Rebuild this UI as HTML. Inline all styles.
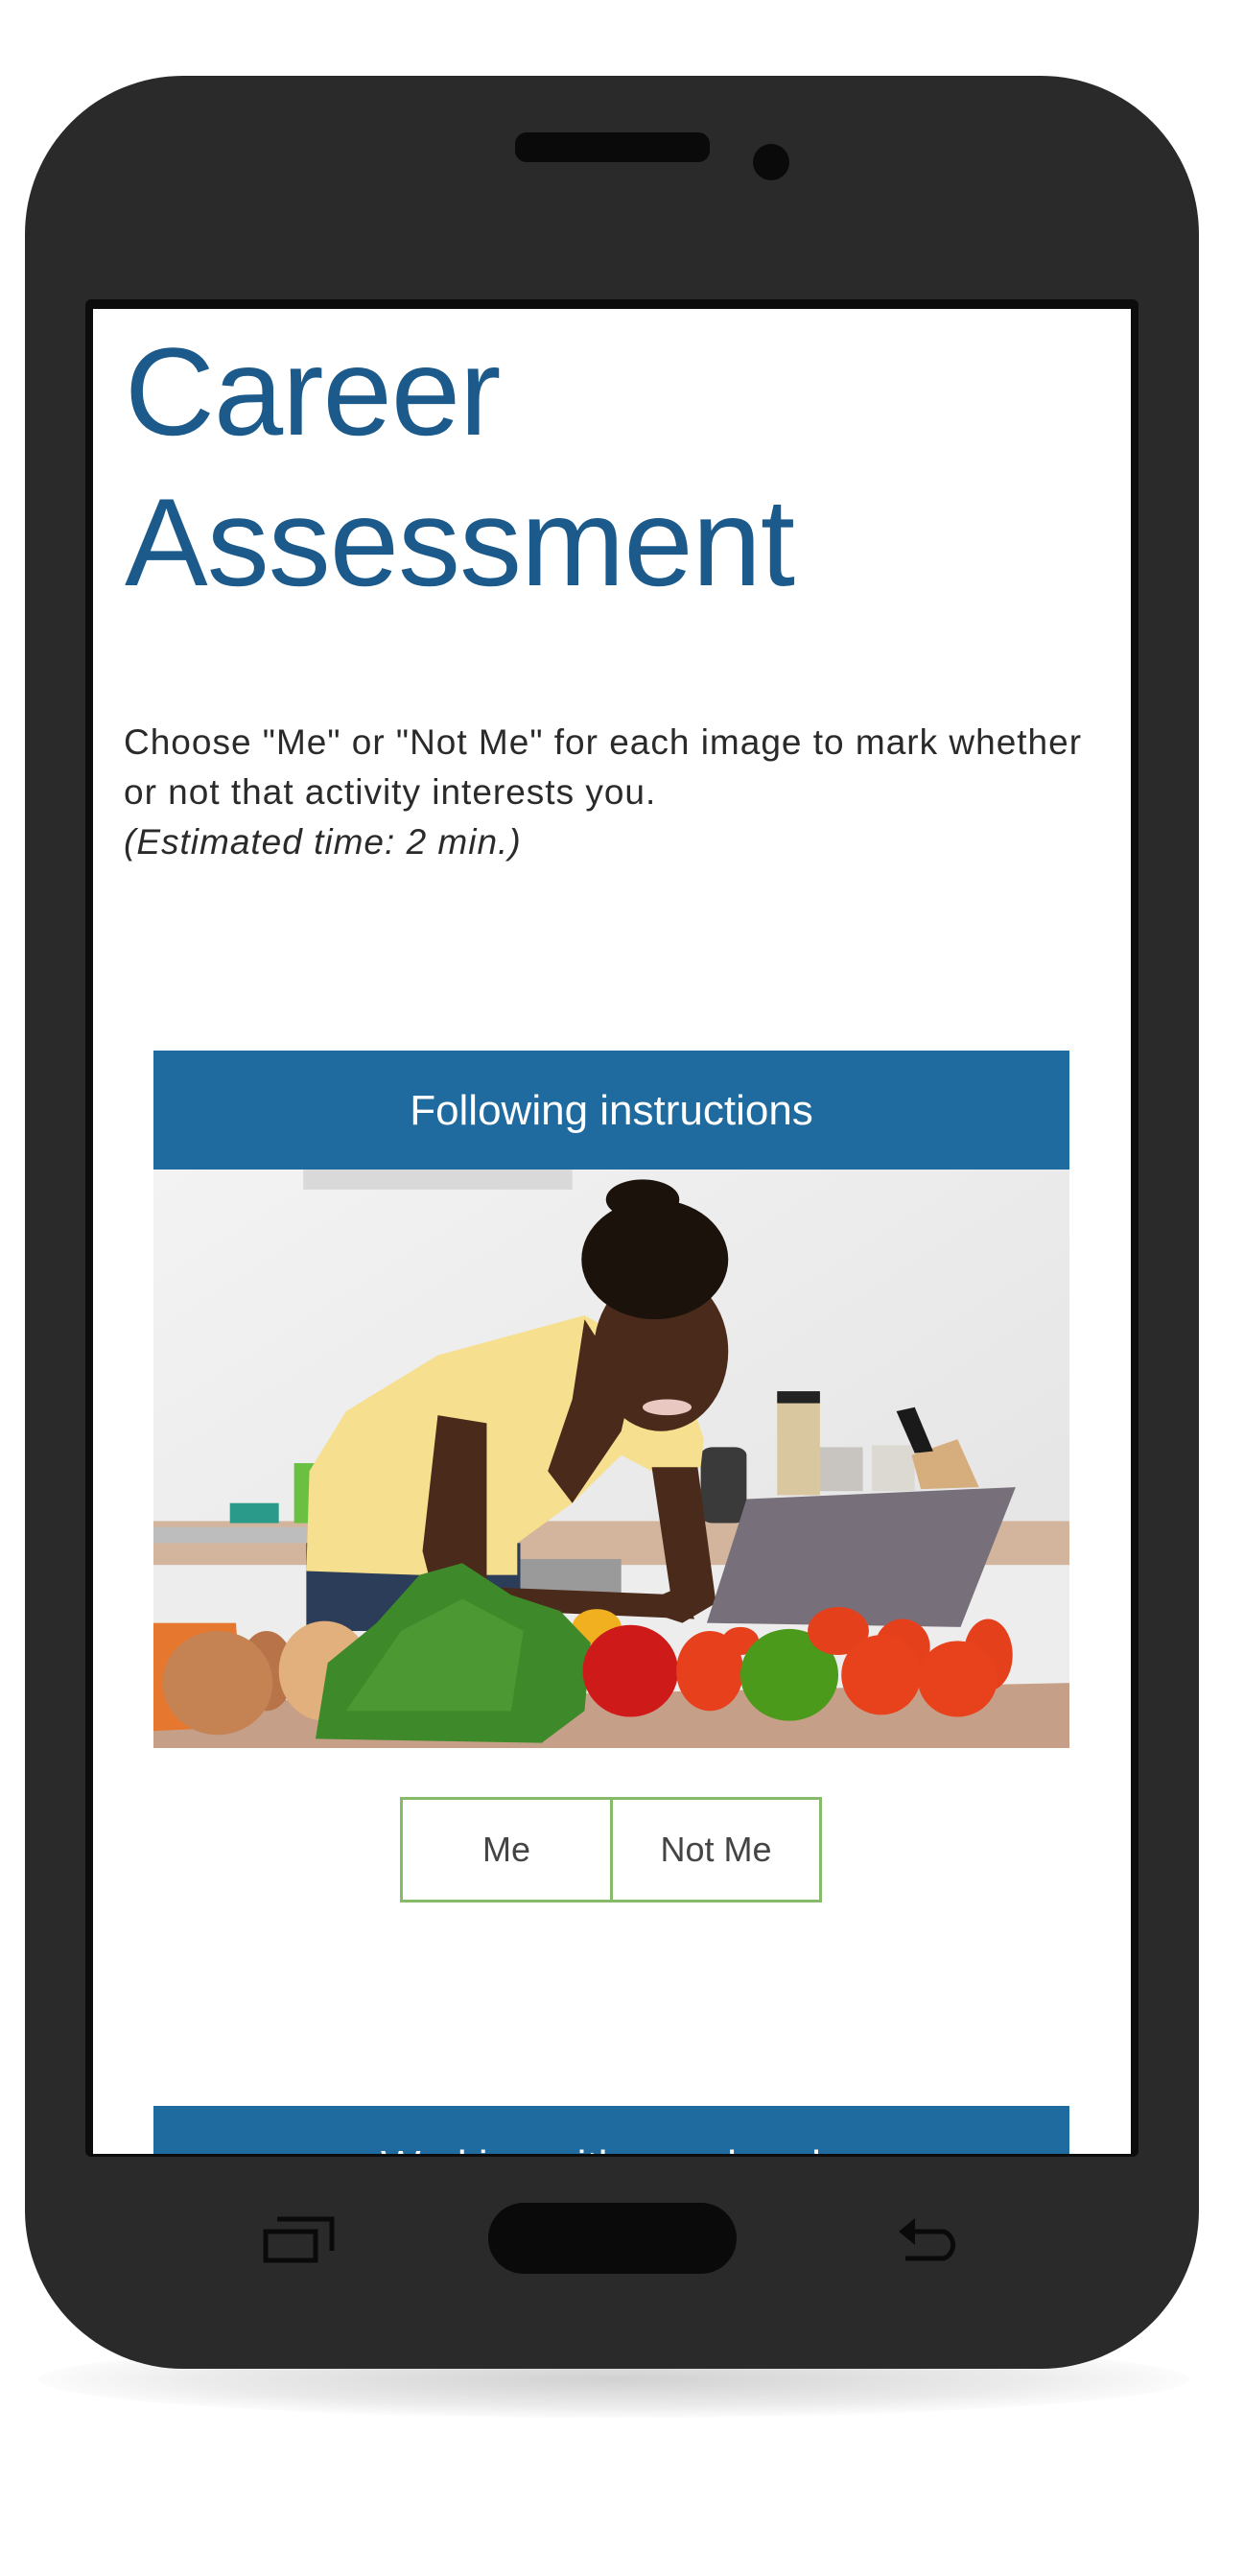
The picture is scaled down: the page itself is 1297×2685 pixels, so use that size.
<!DOCTYPE html>
<html><head><meta charset="utf-8">
<style>
html,body{margin:0;padding:0;background:#fff;}
body{width:1297px;height:2685px;position:relative;overflow:hidden;font-family:"Liberation Sans",sans-serif;}
.shadow{position:absolute;left:40px;top:2440px;width:1200px;height:80px;border-radius:50%;background:radial-gradient(ellipse at center,rgba(0,0,0,0.18) 0%,rgba(0,0,0,0.08) 50%,rgba(0,0,0,0) 75%);}
.phone{position:absolute;left:26px;top:79px;width:1224px;height:2390px;background:#292a29;border-radius:165px;}
.bezel{position:absolute;left:89px;top:312px;width:1098px;height:1936px;background:#0c0c0c;border-radius:6px;}
.screen{position:absolute;left:97px;top:322px;width:1082px;height:1923px;background:#fff;overflow:hidden;}
.speaker{position:absolute;left:537px;top:138px;width:203px;height:31px;background:#0a0a0a;border-radius:12px;}
.cam{position:absolute;left:785px;top:150px;width:38px;height:38px;background:#0a0a0a;border-radius:50%;}
.home{position:absolute;left:509px;top:2296px;width:259px;height:74px;background:#0a0a0a;border-radius:37px;}
h1{position:absolute;left:33px;top:0;margin:0;font-weight:normal;color:#1b5a8a;font-size:130px;line-height:157px;padding-top:8px;letter-spacing:-1px;}
.p{position:absolute;left:32px;top:426px;width:1040px;font-size:37px;letter-spacing:1px;line-height:52px;color:#2a2a2a;white-space:nowrap;}
.hdr{position:absolute;left:63px;width:955px;height:125px;background:#1f6a9e;color:#fff;font-size:44px;text-align:center;line-height:125px;}
.img{position:absolute;left:63px;top:897px;width:955px;height:603px;}
.btns{position:absolute;left:320px;top:1551px;width:440px;height:110px;}
.b{position:absolute;top:0;height:104px;border:3px solid #85bb6a;box-sizing:content-box;color:#444;font-size:36px;line-height:104px;text-align:center;}
</style></head><body>
<div class="shadow"></div>
<div class="phone"></div>
<div class="speaker"></div>
<div class="cam"></div>
<div class="bezel"></div>
<div class="screen">
  <h1>Career<br>Assessment</h1>
  <div class="p">Choose "Me" or "Not Me" for each image to mark whether<br>or not that activity interests you.<br><i>(Estimated time: 2 min.)</i></div>
  <div class="hdr" style="top:773px">Following instructions</div>
  <svg class="img" viewBox="15 45 1498 1448" preserveAspectRatio="none">
    <defs><linearGradient id="w" x1="0" y1="0" x2="1" y2="1"><stop offset="0" stop-color="#f3f3f3"/><stop offset="1" stop-color="#e2e2e2"/></linearGradient></defs>
    <rect x="15" y="45" width="1498" height="1448" fill="url(#w)"/>
    <rect x="260" y="45" width="440" height="50" fill="#d9d9d9"/>
    <rect x="15" y="925" width="1498" height="110" fill="#d2b59c"/>
    <rect x="15" y="1035" width="1498" height="458" fill="#ededed"/>
    <rect x="610" y="1020" width="170" height="90" fill="#9a9a9a"/>
    <rect x="15" y="940" width="250" height="40" fill="#bdbdbd"/>
    <rect x="140" y="880" width="80" height="50" fill="#2a9a8a"/>
    <rect x="245" y="780" width="40" height="150" fill="#6ac040"/>
    <rect x="910" y="740" width="75" height="190" rx="20" fill="#3a3a3a"/>
    <rect x="1035" y="600" width="70" height="260" fill="#d9c7a0"/>
    <rect x="1035" y="600" width="70" height="30" fill="#222"/>
    <rect x="1105" y="740" width="70" height="110" fill="#c8c4bf"/>
    <rect x="1190" y="735" width="70" height="115" fill="#dcd8d2"/>
    <polygon points="1255,760 1330,720 1365,840 1270,845" fill="#d6ae7e"/>
    <polygon points="1230,650 1260,640 1290,750 1260,755" fill="#1a1a1a"/>
    <rect x="265" y="980" width="350" height="220" fill="#2b3d58"/>
    <polygon points="265,1050 270,800 330,650 480,510 720,410 800,480 880,560 915,720 910,790 830,800 780,760 700,880 610,980 610,1060 450,1060" fill="#f6df8e"/>
    <polygon points="720,420 795,600 780,700 700,880 660,800 700,620" fill="#4a2b1b"/>
    <polygon points="480,660 560,680 560,1100 470,1090 455,1000" fill="#4a2b1b"/>
    <polygon points="830,790 905,790 935,1130 880,1180 800,1140 860,1100" fill="#4a2b1b"/>
    <polygon points="560,1090 880,1110 900,1170 600,1150" fill="#4a2b1b"/>
    <ellipse cx="845" cy="500" rx="110" ry="200" fill="#4a2b1b"/>
    <ellipse cx="835" cy="270" rx="120" ry="150" fill="#1c120c"/>
    <ellipse cx="815" cy="120" rx="60" ry="50" fill="#1c120c"/>
    <ellipse cx="855" cy="640" rx="40" ry="20" fill="#e8c8c0"/>
    <polygon points="985,870 1425,840 1335,1190 920,1180" fill="#77707a"/>
    <polygon points="15,1380 1513,1330 1513,1493 15,1493" fill="#c69f89"/>
    <polygon points="15,1180 150,1180 160,1440 15,1450" fill="#e5782e"/>
    <ellipse cx="200" cy="1300" rx="45" ry="100" fill="#b87448"/>
    <ellipse cx="120" cy="1330" rx="90" ry="130" fill="#c58354"/>
    <ellipse cx="295" cy="1300" rx="75" ry="125" fill="#e2b07c"/>
    <ellipse cx="740" cy="1190" rx="40" ry="45" fill="#f0b020"/>
    <path d="M280,1470 L300,1280 L380,1180 L450,1060 L520,1030 L600,1110 L680,1150 L730,1230 L720,1400 L650,1480 Z" fill="#3e8a2a"/>
    <path d="M330,1400 L420,1200 L520,1120 L620,1200 L600,1400 Z" fill="#57a33a" opacity="0.6"/>
    <ellipse cx="795" cy="1300" rx="78" ry="115" fill="#cf1a1a"/>
    <ellipse cx="925" cy="1300" rx="55" ry="100" fill="#e6401c"/>
    <ellipse cx="975" cy="1225" rx="30" ry="35" fill="#e6401c"/>
    <ellipse cx="1055" cy="1310" rx="80" ry="115" fill="#4c9a1c"/>
    <ellipse cx="1135" cy="1200" rx="50" ry="60" fill="#e5401c"/>
    <ellipse cx="1240" cy="1240" rx="45" ry="70" fill="#e5401c"/>
    <ellipse cx="1380" cy="1260" rx="40" ry="90" fill="#e5401c"/>
    <ellipse cx="1205" cy="1310" rx="65" ry="100" fill="#e8421c"/>
    <ellipse cx="1330" cy="1320" rx="65" ry="95" fill="#e8421c"/>
  </svg>
  <div class="btns">
    <div class="b" style="left:0;width:216px;">Me</div>
    <div class="b" style="left:219px;width:215px;">Not Me</div>
  </div>
  <div class="hdr" style="top:1873px">Working with your hands</div>
</div>
<div class="home"></div>
<svg style="position:absolute;left:274px;top:2310px" width="78" height="50" viewBox="0 0 78 50">
  <rect x="3" y="16" width="52" height="30" fill="none" stroke="#0a0a0a" stroke-width="5"/>
  <path d="M15,3 H72 V36" fill="none" stroke="#0a0a0a" stroke-width="5"/>
</svg>
<svg style="position:absolute;left:934px;top:2308px" width="72" height="52" viewBox="0 0 72 52">
  <path d="M12,18 H50 A15,15 0 0 1 50,46 H10" fill="none" stroke="#0a0a0a" stroke-width="5"/>
  <polygon points="3,18 20,4 20,32" fill="#0a0a0a"/>
</svg>
</body></html>
